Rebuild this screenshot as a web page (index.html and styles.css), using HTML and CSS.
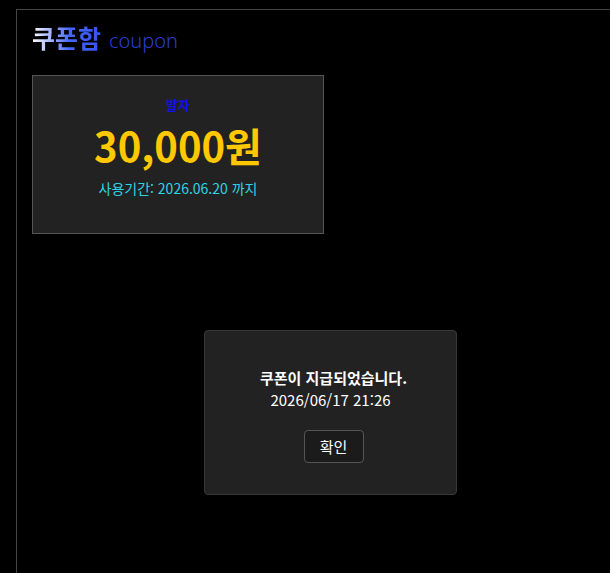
FILE: index.html
```html
<!DOCTYPE html>
<html lang="ko">
<head>
<meta charset="utf-8">
<link rel="stylesheet" href="styles.css">
</head>
<body>
<div class="page">
  <h1 class="title"><span class="title-ko">쿠폰함</span><span class="title-en">coupon</span></h1>
  <div class="coupon">
    <div class="coupon-name">발자</div>
    <div class="coupon-amount">30,000원</div>
    <div class="coupon-date">사용기간: 2026.06.20 까지</div>
  </div>
</div>
<div class="dialog">
  <div class="dialog-msg">쿠폰이 지급되었습니다.</div>
  <div class="dialog-time">2026/06/17 21:26</div>
  <button class="dialog-btn">확인</button>
</div>
</body>
</html>
```
FILE: styles.css
```css
html, body {
  margin: 0;
  padding: 0;
  background: #000;
  height: 100%;
  overflow: hidden;
}
body {
  font-family: "Noto Sans CJK KR", "Noto Sans", sans-serif;
  color: #fff;
  padding: 9px 0 0 16px;
  box-sizing: border-box;
}
.page {
  border-top: 1px solid #444;
  border-left: 1px solid #444;
  height: 100%;
  padding: 12px 15px;
  box-sizing: border-box;
}
.title {
  margin: 0;
  display: flex;
  align-items: baseline;
  gap: 8px;
  line-height: 30px;
  height: 30px;
}
.title-ko {
  font-size: 25px;
  font-weight: 700;
  background: linear-gradient(90deg, #ffffff 0%, #4466ff 55%, #3355ee 100%);
  -webkit-background-clip: text;
  background-clip: text;
  color: transparent;
}
.title-en {
  font-size: 20px;
  font-weight: 300;
  color: #2a3fcf;
  font-family: "Noto Sans", sans-serif;
}
.coupon {
  margin-top: 23px;
  width: 292px;
  height: 159px;
  box-sizing: border-box;
  background: #222;
  border: 1px solid #555;
  display: flex;
  flex-direction: column;
  align-items: center;
  padding-top: 19px;
}
.coupon-name {
  color: #1010ee;
  font-size: 13px;
  font-weight: 700;
  line-height: 20px;
}
.coupon-amount {
  color: #ffc800;
  font-size: 40px;
  font-weight: 700;
  line-height: 52px;
  margin-top: 4px;
}
.coupon-date {
  color: #2dd4e6;
  font-size: 14px;
  line-height: 22px;
  margin-top: 6px;
}
.dialog {
  position: absolute;
  left: 204px;
  top: 330px;
  width: 253px;
  height: 165px;
  box-sizing: border-box;
  background: #222;
  border: 1px solid #383838;
  border-radius: 4px;
  display: flex;
  flex-direction: column;
  align-items: center;
  padding-top: 36px;
}
.dialog-msg {
  font-size: 15px;
  font-weight: 700;
  line-height: 22px;
  margin-left: 6px;
}
.dialog-time {
  font-size: 15px;
  line-height: 22px;
}
.dialog-btn {
  margin-top: 19px;
  margin-left: 6px;
  width: 60px;
  height: 33px;
  background: #1b1b1b;
  color: #fff;
  border: 1px solid #555;
  border-radius: 4px;
  font-family: "Noto Sans CJK KR", sans-serif;
  font-size: 15px;
  padding: 0;
}
```
